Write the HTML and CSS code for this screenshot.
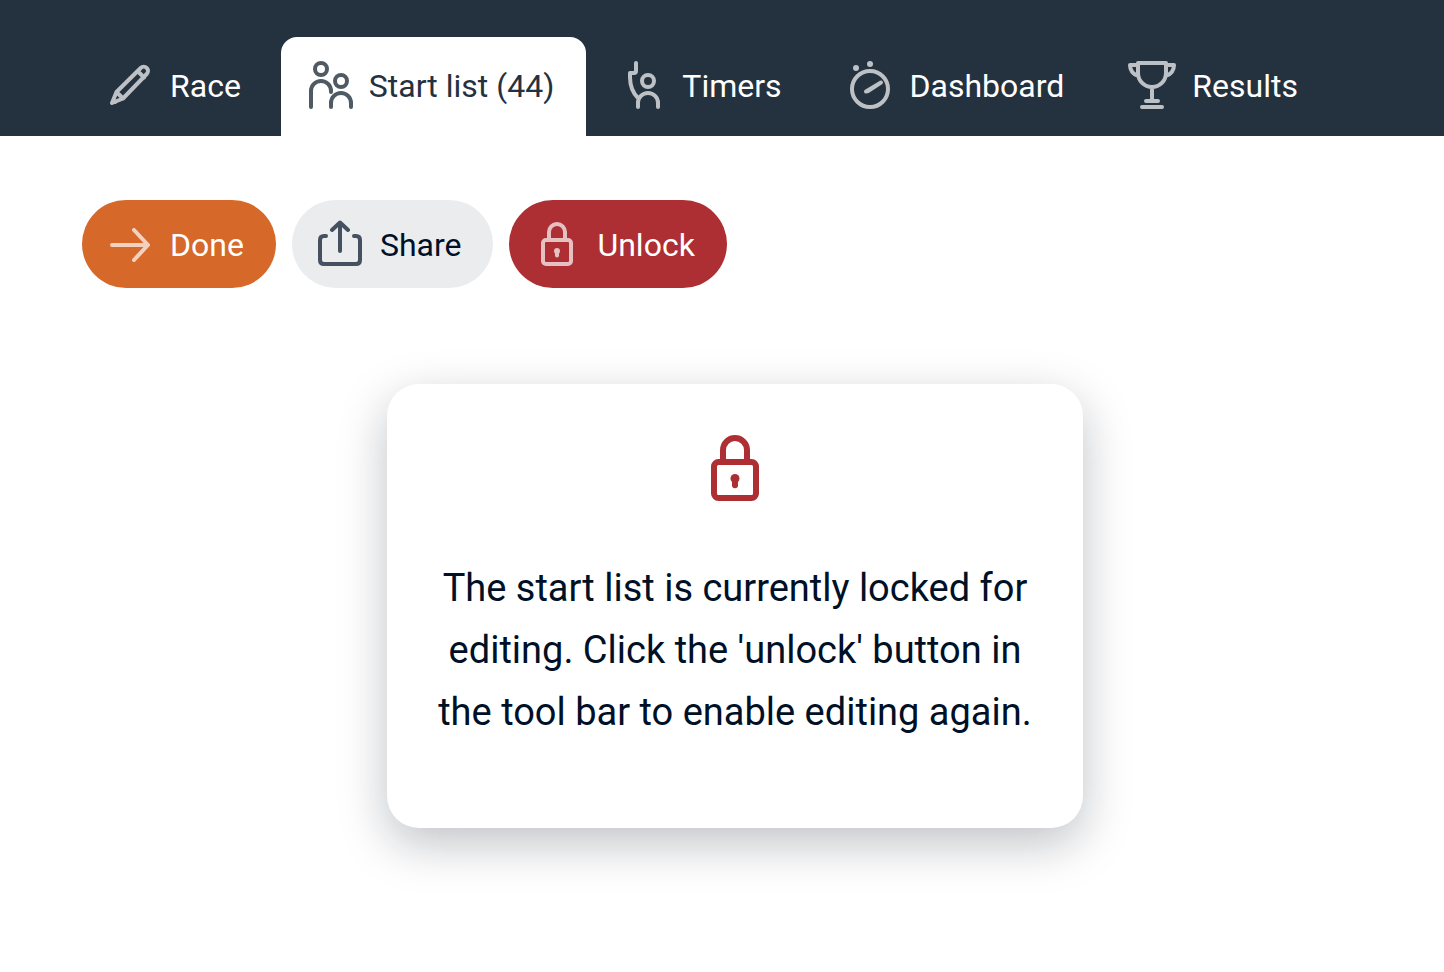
FILE: index.html
```html
<!DOCTYPE html>
<html lang="en">
<head>
<meta charset="utf-8">
<title>Start list</title>
<link rel="stylesheet" href="styles.css">
</head>
<body>
<svg class="sprite" aria-hidden="true">
  <symbol id="lock" viewBox="0 0 48 48">
    <rect x="10" y="20" width="28" height="24" rx="3"/>
    <path d="M16 20v-8a8 8 0 0 1 16 0v8"/>
    <circle class="solid" cx="24" cy="31" r="3"/>
    <path d="M24 31v4.500"/>
  </symbol>
</svg>
<header class="header">
  <nav class="tabs">
    <a class="tab" href="#race">
      <svg class="icon" viewBox="0 0 48 48"><path d="M6 42l4.500-11L34.700 7a4.200 4.200 0 0 1 6 6L17 37.500L6 42zM31.500 10l6.500 6.500M10.500 31l6.500 6.500M7 40l2 1"/></svg>
      <span class="label">Race</span>
    </a>
    <a class="tab tab-active" href="#start-list" aria-current="page">
      <svg class="icon" viewBox="0 0 48 48"><circle cx="16" cy="8" r="6"/><circle cx="36" cy="20" r="6"/><path d="M6 46V30a10 10 0 0 1 20 0v1M26 46v-4a10 10 0 0 1 20 0v4"/></svg>
      <span class="label">Start list (44)</span>
    </a>
    <a class="tab" href="#timers">
      <svg class="icon" viewBox="0 0 48 48"><circle cx="30" cy="20" r="6"/><path d="M20 46v-4a10 10 0 0 1 20 0v4M18 2v8q0 2-2 2h-4v4c0 8 2 15 8 21"/></svg>
      <span class="label">Timers</span>
    </a>
    <a class="tab" href="#dashboard">
      <svg class="icon" viewBox="0 0 48 48"><circle cx="24" cy="28" r="18"/><circle class="solid" cx="24" cy="3" r="3"/><circle class="solid" cx="10" cy="7" r="3"/><path d="M20 30.500L35 21.500L22 30z"/></svg>
      <span class="label">Dashboard</span>
    </a>
    <a class="tab" href="#results">
      <svg class="icon" viewBox="0 0 48 48"><path d="M10 2h28v10a14 14 0 0 1-28 0zM24 26v14M18 40h12M14 46h20M10 4H2c0 6 3 9 8 11M38 4h8c0 6-3 9-8 11"/></svg>
      <span class="label">Results</span>
    </a>
  </nav>
</header>
<main class="content">
  <div class="toolbar">
    <button class="button button-primary" type="button">
      <svg class="icon" viewBox="0 0 48 48"><path d="M6 25h36M28 10l14 15L28 40"/></svg>
      <span class="label">Done</span>
    </button>
    <button class="button" type="button">
      <svg class="icon" viewBox="0 0 48 48"><path d="M10 16H8q-4 0-4 4v20q0 4 4 4h32q4 0 4-4V20q0-4-4-4h-2M24 31V2.500M16 10l8-7.500l8 7.500"/></svg>
      <span class="label">Share</span>
    </button>
    <button class="button button-danger" type="button">
      <svg class="icon"><use href="#lock"/></svg>
      <span class="label">Unlock</span>
    </button>
  </div>
  <section class="card">
    <svg class="card-icon"><use href="#lock"/></svg>
    <p class="card-text">The start list is currently locked for editing. Click the 'unlock' button in the tool bar to enable editing again.</p>
  </section>
</main>
</body>
</html>
```
FILE: styles.css
```css
* {
  box-sizing: border-box;
}

body {
  margin: 0;
  background: #fff;
  color: #001026;
  font-family: Roboto, "Liberation Sans", sans-serif;
  font-size: 32px;
  line-height: 46px;
}

.sprite {
  position: absolute;
  width: 0;
  height: 0;
}

.icon,
.card-icon {
  flex: none;
  fill: none;
  stroke: currentColor;
  stroke-width: 4px;
  stroke-linecap: round;
  stroke-linejoin: round;
}

.icon {
  width: 48px;
  height: 48px;
  opacity: 0.7;
}

.solid {
  fill: currentColor;
  stroke: none;
}

.label {
  padding-top: 2px;
}

.header {
  padding: 37px 56px 0 82px;
  background: #24313f;
}

.tabs {
  display: flex;
  gap: 8px;
}

.tab {
  display: flex;
  align-items: center;
  gap: 16px;
  padding: 24px 32px 27px 24px;
  border-radius: 16px 16px 0 0;
  color: #fff;
  text-decoration: none;
  white-space: nowrap;
}

.tab-active {
  background: #fff;
  color: #24313f;
}

.tab-active .icon {
  opacity: 0.8;
}

.content {
  padding: 64px 56px 64px 82px;
}

.toolbar {
  display: flex;
  flex-wrap: wrap;
  gap: 16px;
}

.button {
  display: flex;
  align-items: center;
  gap: 16px;
  padding: 20px 32px 20px 24px;
  border: 0;
  border-radius: 44px;
  background: #ebecee;
  color: #001026;
  font: inherit;
  cursor: pointer;
}

.button-primary {
  background: #d66829;
  color: #fff;
}

.button-danger {
  background: #ad2f33;
  color: #fff;
}

.card {
  display: flex;
  flex-direction: column;
  align-items: center;
  max-width: 696px;
  margin: 96px auto 0;
  padding: 48px 40px;
  border-radius: 32px;
  background: #fff;
  box-shadow: 0 16px 48px rgba(0, 16, 30, 0.25);
}

.card-icon {
  width: 72px;
  height: 72px;
  color: #ad2f33;
}

.card-text {
  margin: 53px 0 37px;
  font-size: 38px;
  line-height: 62px;
  text-align: center;
}
```
